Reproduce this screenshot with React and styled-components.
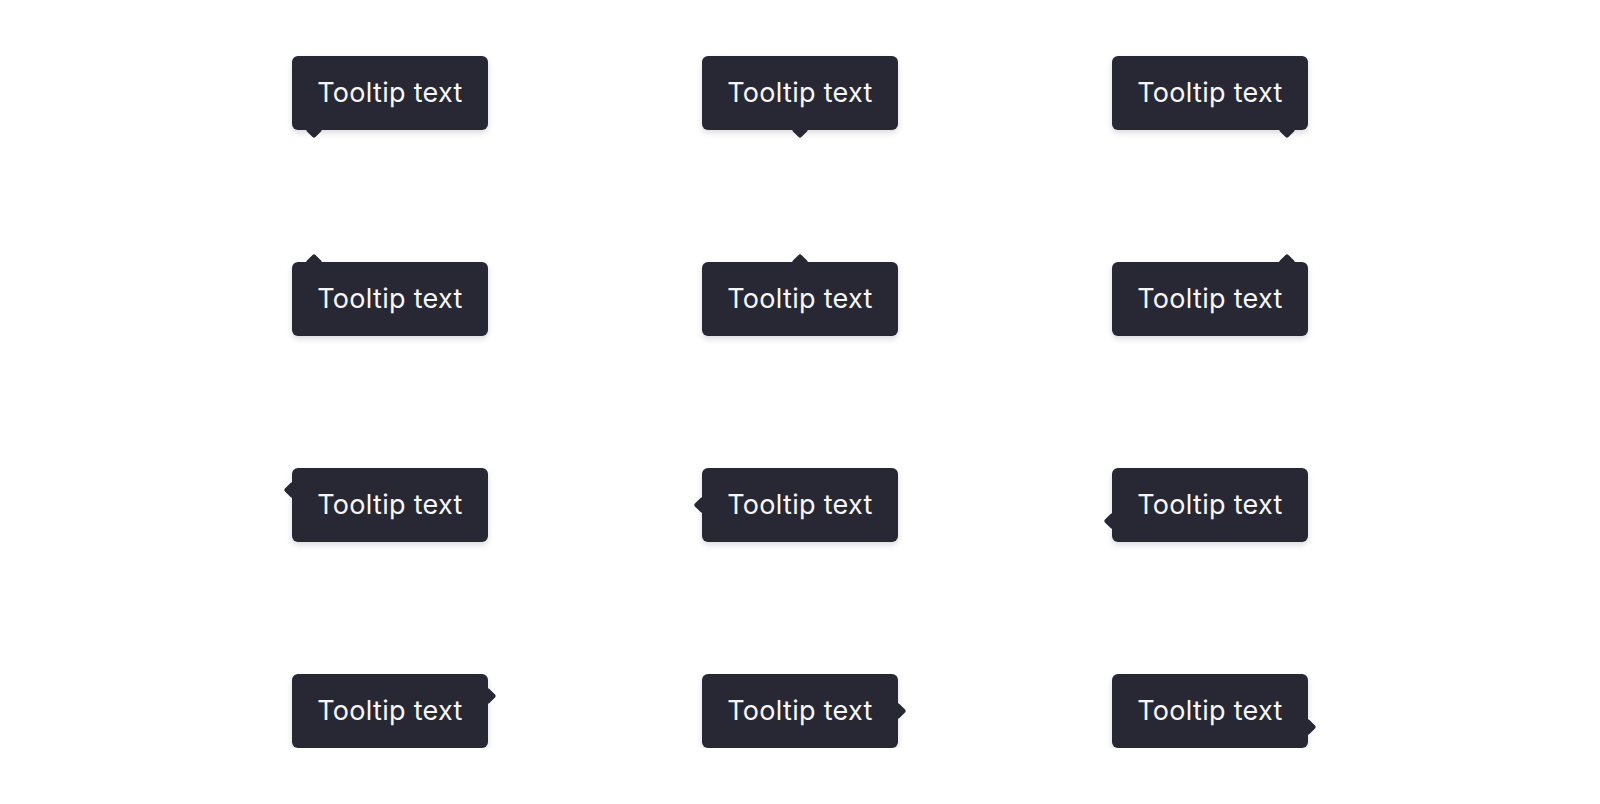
import React from "react";
import styled, { createGlobalStyle, css } from "styled-components";

const GlobalStyle = createGlobalStyle`
  * { box-sizing: border-box; }
  body {
    margin: 0;
    background: #ffffff;
    font-family: Inter, "Noto Sans", sans-serif;
  }
`;

const Grid = styled.div`
  display: grid;
  grid-template-columns: repeat(3, 196px);
  column-gap: 214px;
  row-gap: 132px;
  justify-content: center;
  padding-top: 56px;
`;

const ARROW = 12;

const arrowPlacement = ({ $side, $align }) => {
  const horizontal = $side === "top" || $side === "bottom";
  const axisStart = horizontal ? "left" : "top";
  const axisEnd = horizontal ? "right" : "bottom";
  let along;
  if ($align === "start") along = `${axisStart}: 15.5px;`;
  else if ($align === "end") along = `${axisEnd}: 15.5px;`;
  else along = `${axisStart}: calc(50% - ${ARROW / 2}px);`;
  return css`
    ${$side}: -${ARROW / 2}px;
    ${along}
  `;
};

const Tooltip = styled.div`
  position: relative;
  width: 196px;
  height: 74px;
  padding-bottom: 2px;
  display: flex;
  align-items: center;
  justify-content: center;
  background: #272833;
  color: #f7f7f8;
  border-radius: 6px;
  font-size: 27px;
  letter-spacing: 0.3px;
  box-shadow: 0 3px 6px rgba(0, 0, 0, 0.14);

  &::before {
    content: "";
    position: absolute;
    width: ${ARROW}px;
    height: ${ARROW}px;
    background: #272833;
    border-radius: 2px;
    transform: rotate(45deg);
    ${arrowPlacement}
  }
`;

const Label = styled.span`
  position: relative;
`;

const placements = [
  ["bottom", "start"],
  ["bottom", "center"],
  ["bottom", "end"],
  ["top", "start"],
  ["top", "center"],
  ["top", "end"],
  ["left", "start"],
  ["left", "center"],
  ["left", "end"],
  ["right", "start"],
  ["right", "center"],
  ["right", "end"],
];

const App = () => {
  return (
    <>
      <GlobalStyle />
      <Grid>
        {placements.map(([side, align]) => (
          <Tooltip key={side + align} $side={side} $align={align}>
            <Label>Tooltip text</Label>
          </Tooltip>
        ))}
      </Grid>
    </>
  );
};

export default App;
